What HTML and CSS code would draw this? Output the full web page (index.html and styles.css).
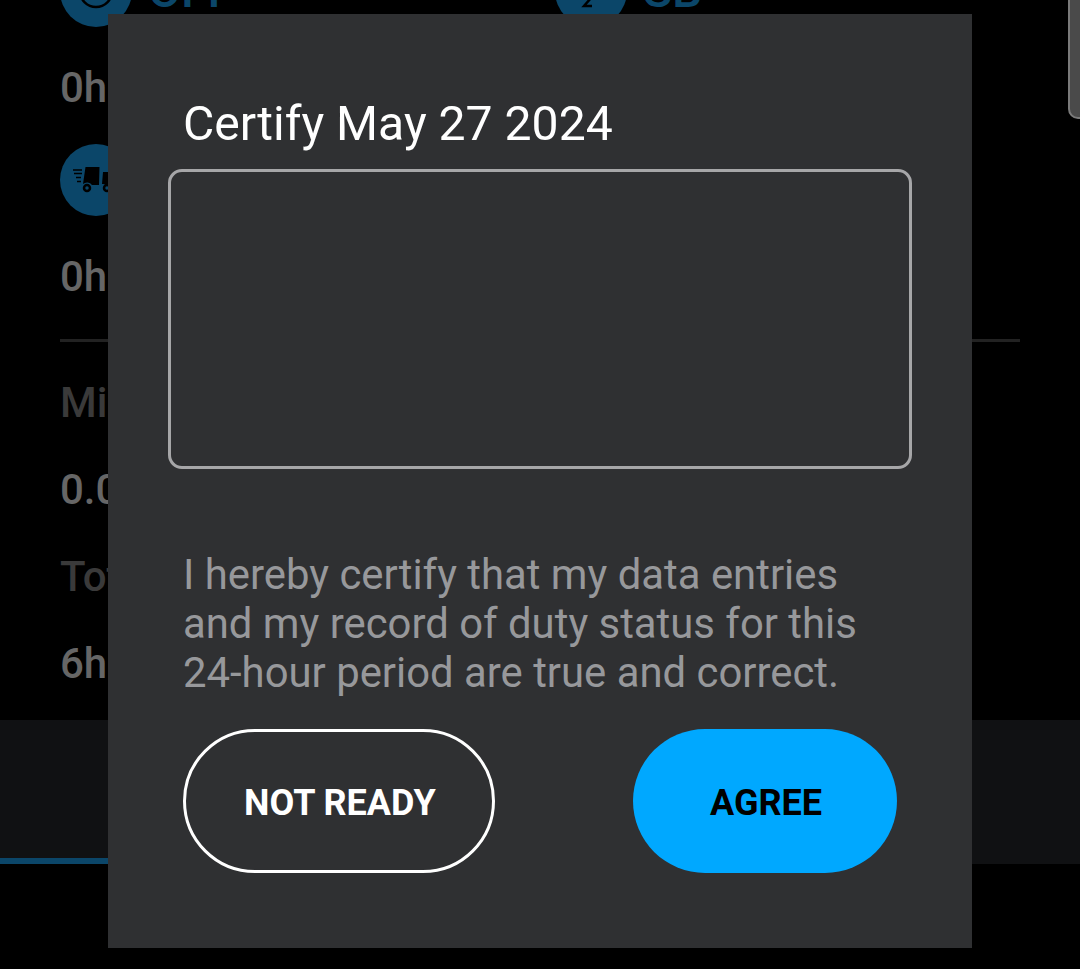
FILE: index.html
```html
<!DOCTYPE html>
<html lang="en">
<head>
<meta charset="utf-8">
<title>Certify</title>
<link rel="stylesheet" href="styles.css">
</head>
<body>
<div class="screen">
  <main class="log">
    <div class="status-grid">
      <div class="status">
        <div class="status-head">
          <span class="badge">
            <svg viewBox="0 0 72 72" width="72" height="72"><circle cx="36" cy="36" r="16" class="ring"/></svg>
          </span>
          <span class="status-name">OFF</span>
        </div>
        <div class="value">0h</div>
      </div>
      <div class="status">
        <div class="status-head">
          <span class="badge">
            <svg viewBox="0 0 72 72" width="72" height="72"><path d="M29 43h7l-7 8h8" class="zed"/></svg>
          </span>
          <span class="status-name">SB</span>
        </div>
      </div>
      <div class="status">
        <div class="status-head">
          <span class="badge">
            <svg viewBox="0 0 72 72" width="72" height="72">
              <path d="M13 26h9M14 29.500h8M16 33.500h5M17 37.500h4" class="lines"/>
              <path d="M25.500 23h14l-.5 18h-7a6 6 0 0 0-9-1z" class="truck"/>
              <path d="M43 28h8v14h-4a5 5 0 0 0-5-2z" class="truck"/>
              <circle cx="27" cy="44" r="3" class="wheel"/>
              <circle cx="47" cy="44" r="3" class="wheel"/>
            </svg>
          </span>
        </div>
        <div class="value">0h</div>
      </div>
    </div>
    <hr class="rule">
    <div class="stat-label">Miles</div>
    <div class="value stat-value">0.0</div>
    <div class="stat-label">Total</div>
    <div class="value stat-value">6h</div>
  </main>
  <nav class="tabbar"><span class="tab-active"></span></nav>
  <div class="scroll-handle"></div>

  <section class="dialog">
    <h1 class="dialog-title">Certify May 27 2024</h1>
    <div class="signature"></div>
    <p class="statement">I hereby certify that my data entries and my record of duty status for this 24-hour period are true and correct.</p>
    <div class="actions">
      <button class="btn btn-outline">NOT READY</button>
      <button class="btn btn-primary">AGREE</button>
    </div>
  </section>
</div>
</body>
</html>
```

FILE: styles.css
```css
* { box-sizing: border-box; }
html, body { margin: 0; padding: 0; background: #000; }
body { font-family: Roboto, "Liberation Sans", sans-serif; }

.screen {
  position: relative;
  width: 1080px;
  height: 969px;
  overflow: hidden;
  background: #000;
}

.log {
  height: 720px;
  padding: 0 60px;
  overflow: hidden;
}

.status-grid {
  display: grid;
  grid-template-columns: 495px 1fr;
  row-gap: 32px;
  margin-top: -45px;
}

.status-head {
  display: flex;
  align-items: center;
  gap: 16px;
  height: 72px;
}

.badge {
  flex: none;
  width: 72px;
  height: 72px;
  border-radius: 50%;
  background: #0b4669;
}
.badge svg { display: block; }
.ring, .zed { fill: none; stroke: #000; stroke-width: 2.500; }
.lines { fill: none; stroke: #000; stroke-width: 1.500; }
.truck { fill: #000; }
.wheel { fill: #0b4669; stroke: #000; stroke-width: 2.500; }

.status-name {
  font-size: 48px;
  font-weight: 500;
  line-height: 72px;
  color: #0b4669;
}

.value {
  font-size: 42px;
  font-weight: 500;
  line-height: 49px;
  color: #666;
  margin-top: 36px;
}

.rule {
  height: 3px;
  margin: 38px 0 0;
  border: 0;
  background: #222;
}

.stat-label {
  font-size: 42px;
  font-weight: 500;
  line-height: 49px;
  color: #3a3a3a;
  margin-top: 36px;
}
.stat-value { margin-top: 38px; }
.stat-value + .stat-label { margin-top: 38px; }

.tabbar {
  position: relative;
  height: 144px;
  background: #101113;
}
.tab-active {
  position: absolute;
  left: 0;
  bottom: 0;
  width: 360px;
  height: 6px;
  background: #0b4669;
}

.scroll-handle {
  position: absolute;
  top: -20px;
  left: 1068px;
  width: 40px;
  height: 139px;
  border: 2px solid #7a7a7a;
  border-radius: 10px;
  background: #4a4a4a;
}

.dialog {
  position: absolute;
  left: 108px;
  top: 14px;
  width: 864px;
  height: 934px;
  padding: 0 75px 0 60px;
  background: #2f3032;
}

.dialog-title {
  margin: 82px 0 0 15px;
  font-size: 48.100px;
  font-weight: 400;
  line-height: 56px;
  color: #fff;
}

.signature {
  width: 744px;
  height: 300px;
  margin-top: 17px;
  border: 3px solid #a6a6a8;
  border-radius: 14px;
}

.statement {
  width: 700px;
  margin: 81px 0 0 15px;
  font-size: 41.850px;
  line-height: 49px;
  color: #97989b;
}

.actions {
  display: flex;
  justify-content: space-between;
  margin: 32px 0 0 15px;
  width: 714px;
}

.btn {
  height: 144px;
  border-radius: 72px;
  font-family: inherit;
  font-size: 36px;
  font-weight: 700;
  padding: 4px 0 0 2px;
}
.btn-outline {
  width: 312px;
  background: transparent;
  border: 3px solid #fff;
  color: #fff;
}
.btn-primary {
  width: 264px;
  background: #00a8ff;
  border: 0;
  color: #000;
}
```
